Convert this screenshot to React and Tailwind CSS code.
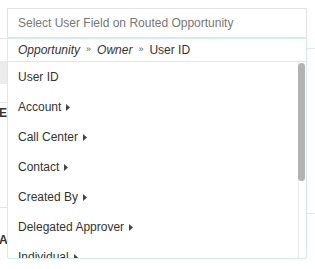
import React from "react";

const items = [
  { label: "User ID", arrow: false },
  { label: "Account", arrow: true },
  { label: "Call Center", arrow: true },
  { label: "Contact", arrow: true },
  { label: "Created By", arrow: true },
  { label: "Delegated Approver", arrow: true },
  { label: "Individual", arrow: true },
];

function Caret() {
  return (
    <svg width="4" height="7" viewBox="0 0 4 7" className="ml-[5px] mt-[1px]">
      <path d="M0 0 L4 3.5 L0 7 Z" fill="#444" />
    </svg>
  );
}

export default function App() {
  return (
    <div className="relative w-[315px] h-[269px] bg-white overflow-hidden font-['Liberation_Sans',Arial,sans-serif]">
      {/* page behind the dropdown */}
      <div className="flex h-full">
        <div className="w-[8px] flex flex-col">
          <div className="h-[39px] border-b border-[#e6e6e6]" />
          <div className="h-[22px]" />
          <div className="h-[23px] bg-[#ececec]" />
          <div className="h-[19px] border-b border-[#e6e6e6]" />
          <div className="h-[20px] flex items-center -ml-[1px] text-[12px] font-bold text-[#333]">Er</div>
          <div className="h-[85px] border-b border-[#e6e6e6]" />
          <div className="h-[22px]" />
          <div className="h-[20px] flex items-center -ml-[1px] text-[12px] font-bold text-[#333]">Ac</div>
        </div>
        <div className="flex-1" />
        <div className="w-[9px] flex flex-col">
          <div className="h-[49px] border-b border-[#e6e6e6]" />
          <div className="h-[165px] border-b border-[#e6e6e6]" />
        </div>
      </div>

      {/* dropdown */}
      <div className="absolute left-[7px] top-[8px] w-[300px]">
        <div className="h-[30px] border border-[#e3e3e3] bg-white flex items-center pl-[10px] text-[12px] text-[#777]">
          Select User Field on Routed Opportunity
        </div>
        <div className="h-[24px] border border-[#d3eee5] bg-white flex items-center pl-[10px] text-[12px] text-[#333]">
          <span className="italic">Opportunity</span>
          <span className="mx-[6px] text-[9px] text-[#555]">»</span>
          <span className="italic">Owner</span>
          <span className="mx-[6px] text-[9px] text-[#555]">»</span>
          <span>User ID</span>
        </div>
        <div className="relative h-[197px] border border-t-0 border-[#d3eee5] rounded-b-[3px] bg-white overflow-hidden">
          <div className="pr-[10px]">
            {items.map((it) => (
              <div key={it.label} className="h-[30px] flex items-center pl-[10px] text-[12px] text-[#333]">
                {it.label}
                {it.arrow && <Caret />}
              </div>
            ))}
          </div>
          <div className="absolute right-0 top-0 bottom-0 w-[8px] border-l border-[#e8e8e8] bg-white" />
          <div className="absolute right-[1px] top-[1px] w-[7px] h-[118px] rounded-[4px] bg-[#b3b3b3]" />
        </div>
      </div>
    </div>
  );
}
